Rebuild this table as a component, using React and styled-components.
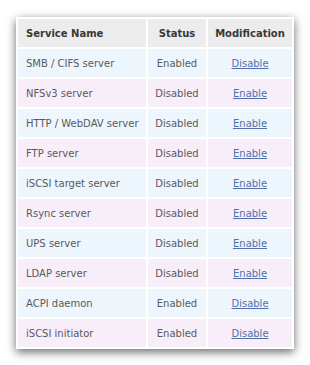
import React from "react";
import styled, { createGlobalStyle } from "styled-components";

const GlobalStyle = createGlobalStyle`
  body {
    margin: 0;
    background: #ffffff;
    font-family: "DejaVu Sans", Verdana, sans-serif;
  }
`;

const Page = styled.div`
  padding: 17px 0 16px 16px;
`;

const Card = styled.div`
  width: 278px;
  background: #ffffff;
  box-shadow: 0 3px 9px rgba(0, 0, 0, 0.6);
`;

const ServiceTable = styled.table`
  width: 100%;
  border-collapse: separate;
  border-spacing: 2px;
  font-size: 10px;
`;

const HeadCell = styled.th`
  height: 28px;
  padding: 0 0 0 ${(props) => (props.left ? "8px" : "0")};
  background: #ececec;
  color: #383838;
  font-weight: bold;
  text-align: ${(props) => (props.left ? "left" : "center")};
  width: ${(props) => props.w}px;
`;

const Cell = styled.td`
  height: 28px;
  padding: 0 0 0 ${(props) => (props.left ? "8px" : "0")};
  background: ${(props) => (props.odd ? "#edf5fd" : "#f7eefa")};
  color: #5a5a5a;
  text-align: ${(props) => (props.left ? "left" : "center")};
`;

const ActionLink = styled.a`
  color: #5070ab;
  text-decoration: underline;
  cursor: pointer;
`;

const services = [
  { name: "SMB / CIFS server", enabled: true },
  { name: "NFSv3 server", enabled: false },
  { name: "HTTP / WebDAV server", enabled: false },
  { name: "FTP server", enabled: false },
  { name: "iSCSI target server", enabled: false },
  { name: "Rsync server", enabled: false },
  { name: "UPS server", enabled: false },
  { name: "LDAP server", enabled: false },
  { name: "ACPI daemon", enabled: true },
  { name: "iSCSI initiator", enabled: true },
];

const App = () => {
  return (
    <Page>
      <GlobalStyle />
      <Card>
        <ServiceTable>
          <thead>
            <tr>
              <HeadCell left w={120}>
                Service Name
              </HeadCell>
              <HeadCell w={58}>Status</HeadCell>
              <HeadCell w={84}>Modification</HeadCell>
            </tr>
          </thead>
          <tbody>
            {services.map((s, i) => (
              <tr key={s.name}>
                <Cell left odd={i % 2 === 0}>
                  {s.name}
                </Cell>
                <Cell odd={i % 2 === 0}>
                  {s.enabled ? "Enabled" : "Disabled"}
                </Cell>
                <Cell odd={i % 2 === 0}>
                  <ActionLink>{s.enabled ? "Disable" : "Enable"}</ActionLink>
                </Cell>
              </tr>
            ))}
          </tbody>
        </ServiceTable>
      </Card>
    </Page>
  );
};

export default App;
